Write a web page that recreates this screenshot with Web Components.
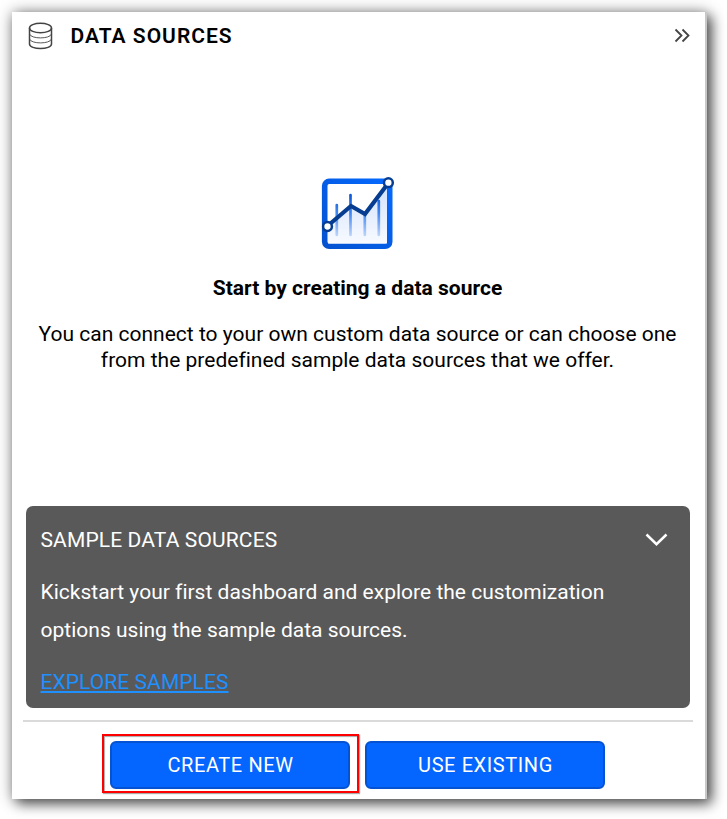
<!DOCTYPE html>
<html lang="en"><head><meta charset="utf-8"><title>Data sources</title>
<style>body{margin:0;background:#fff;font-family:Roboto,"Liberation Sans",sans-serif;color:#000;width:727px;height:819px;overflow:hidden}</style></head>
<body>
<data-panel>
  <panel-header slot="header">DATA SOURCES</panel-header>
  <empty-state><span slot="title">Start by creating a data source</span><span slot="line1">You can connect to your own custom data source or can choose one</span><span slot="line2">from the predefined sample data sources that we offer.</span></empty-state>
  <sample-card><span slot="title">SAMPLE DATA SOURCES</span><span slot="line1">Kickstart your first dashboard and explore the customization</span><span slot="line2">options using the sample data sources.</span><span slot="link">EXPLORE SAMPLES</span></sample-card>
  <action-button slot="actions" highlighted>CREATE NEW</action-button>
  <action-button slot="actions">USE EXISTING</action-button>
</data-panel>
<script>
const define=(name,html)=>customElements.define(name,class extends HTMLElement{
  constructor(){super();this.attachShadow({mode:'open'}).innerHTML=html;}
});
define('data-panel',`<style>
:host{display:flex;flex-direction:column;box-sizing:border-box;width:695px;height:787px;margin:12px 0 0 12px;background:#fff;border-right:2px solid #c8c8c8;box-shadow:5px 5px 12px rgba(0,0,0,.58),0 0 14px rgba(0,0,0,.38)}
footer{box-sizing:border-box;width:670px;margin:12px 0 0 11px;border-top:2px solid #dadada;padding:19px 0 0 87px;display:flex;gap:15px}
</style><slot name="header"></slot><slot></slot><footer><slot name="actions"></slot></footer>`);
define('panel-header',`<style>
:host{display:flex;align-items:center;height:48px;padding:0 14px 0 16px;font-size:21px;font-weight:600;letter-spacing:1px;line-height:24px}
span{margin-left:17.5px;flex:1}svg{display:block;flex:none}
</style><svg width="25" height="28" viewBox="0 0 25 28" fill="none" stroke="#444"><ellipse cx="12.5" cy="6" rx="11" ry="4.7" stroke-width="1.5"/><path d="M1.5 6V22C1.5 28 23.5 28 23.5 22V6" stroke-width="1.5"/><path d="M1.5 12C3 17.2 22 17.2 23.5 12M1.5 17C3 22.2 22 22.2 23.5 17" stroke-width=".9"/></svg>
<span><slot></slot></span><svg width="18" height="16" viewBox="0 0 18 16" fill="none" stroke="#444" stroke-width="1.8"><path d="M2.5 1.5L8.5 7.5L2.5 13.5M9.5 1.5L15.5 7.5L9.5 13.5"/></svg>`);
define('chart-icon',`<style>:host{display:block;width:76px;height:76px}svg{display:block}</style>
<svg width="76" height="76" viewBox="0 0 76 76"><defs>
<linearGradient id="f" x1="1" y1="0" x2="0" y2="1"><stop stop-color="#0569ff"/><stop offset="1" stop-color="#0552d0"/></linearGradient>
<linearGradient id="a" x2="0" y2="1"><stop stop-color="#d2e2fc"/><stop offset="1" stop-color="#f8faff"/></linearGradient>
<linearGradient id="b" gradientUnits="userSpaceOnUse" x1="0" y1="16" x2="0" y2="61"><stop stop-color="#0755d5"/><stop offset=".45" stop-color="#4287f2"/><stop offset="1" stop-color="#c9dcfb"/></linearGradient></defs>
<rect x="4.7" y="4.3" width="65" height="65" rx="4.5" fill="#fff" stroke="url(#f)" stroke-width="5.6"/>
<path d="M8 48L30 29L44 37L67 10V66.5H8Z" fill="url(#a)"/>
<path d="M16.8 28V58M30.5 18V58M44.8 37V58M58.8 24V58" stroke="url(#b)" stroke-width="2.7" stroke-linecap="round"/>
<path d="M7.5 49L31 29L45 37L68 6.5" fill="none" stroke="#063d91" stroke-width="4.2"/>
<g fill="#fff" stroke="#063d91" stroke-width="2.5"><circle cx="7.5" cy="49.5" r="4.4"/><circle cx="68.4" cy="5.7" r="4.4"/></g></svg>`);
define('empty-state',`<style>
:host{display:flex;flex-direction:column;align-items:center;height:446px;box-sizing:border-box;padding-top:117px;white-space:nowrap;font-size:21px;line-height:26px}
chart-icon{margin-right:1px}
h2{font-size:21px;font-weight:700;line-height:26px;margin:22px 0 20px}
h2,div{margin-right:2px;letter-spacing:.01px}
</style><chart-icon></chart-icon><h2><slot name="title"></slot></h2><div><slot name="line1"></slot></div><div><slot name="line2"></slot></div>`);
define('sample-card',`<style>
:host{display:block;box-sizing:border-box;width:664px;height:202px;margin-left:14px;padding:20px 22px 0 14.5px;border-radius:7px;background:#595959;color:#fff;font-size:21px;white-space:nowrap}
header{display:flex;justify-content:space-between;align-items:center;height:27px}
.t{letter-spacing:.13px}
.c,.d{line-height:38px;letter-spacing:.01px}.c{margin-top:20px}
a{display:block;width:max-content;color:#1e90ff;text-decoration:underline;text-decoration-thickness:2px;text-underline-offset:2px;line-height:26px;margin-top:20px;letter-spacing:.07px}
</style><header><span class="t"><slot name="title"></slot></span><svg width="24" height="16" viewBox="0 0 24 16" fill="none" stroke="#fff" stroke-width="2.5"><path d="M2.5 2.5L12.5 12.2L22.5 2.5"/></svg></header>
<div class="c"><slot name="line1"></slot></div><div class="d"><slot name="line2"></slot></div><a><slot name="link"></slot></a>`);
define('action-button',`<style>
:host{display:block;position:relative;width:240px;height:48px}
button{box-sizing:border-box;width:100%;height:100%;padding:0 0 0 1px;border:2px solid #0552d2;border-radius:6px;background:#0565ff;color:#fff;font:400 20px/24px Roboto,sans-serif;letter-spacing:.6px}
:host([highlighted])::after{content:"";position:absolute;box-sizing:border-box;left:-8px;top:-7px;width:257px;height:59px;border:2px solid #f00;box-shadow:1px 1px 1px 0 #aaa,inset 1px 1px 1px 0 #aaa;pointer-events:none}
</style><button><slot></slot></button>`);
</script></body></html>
